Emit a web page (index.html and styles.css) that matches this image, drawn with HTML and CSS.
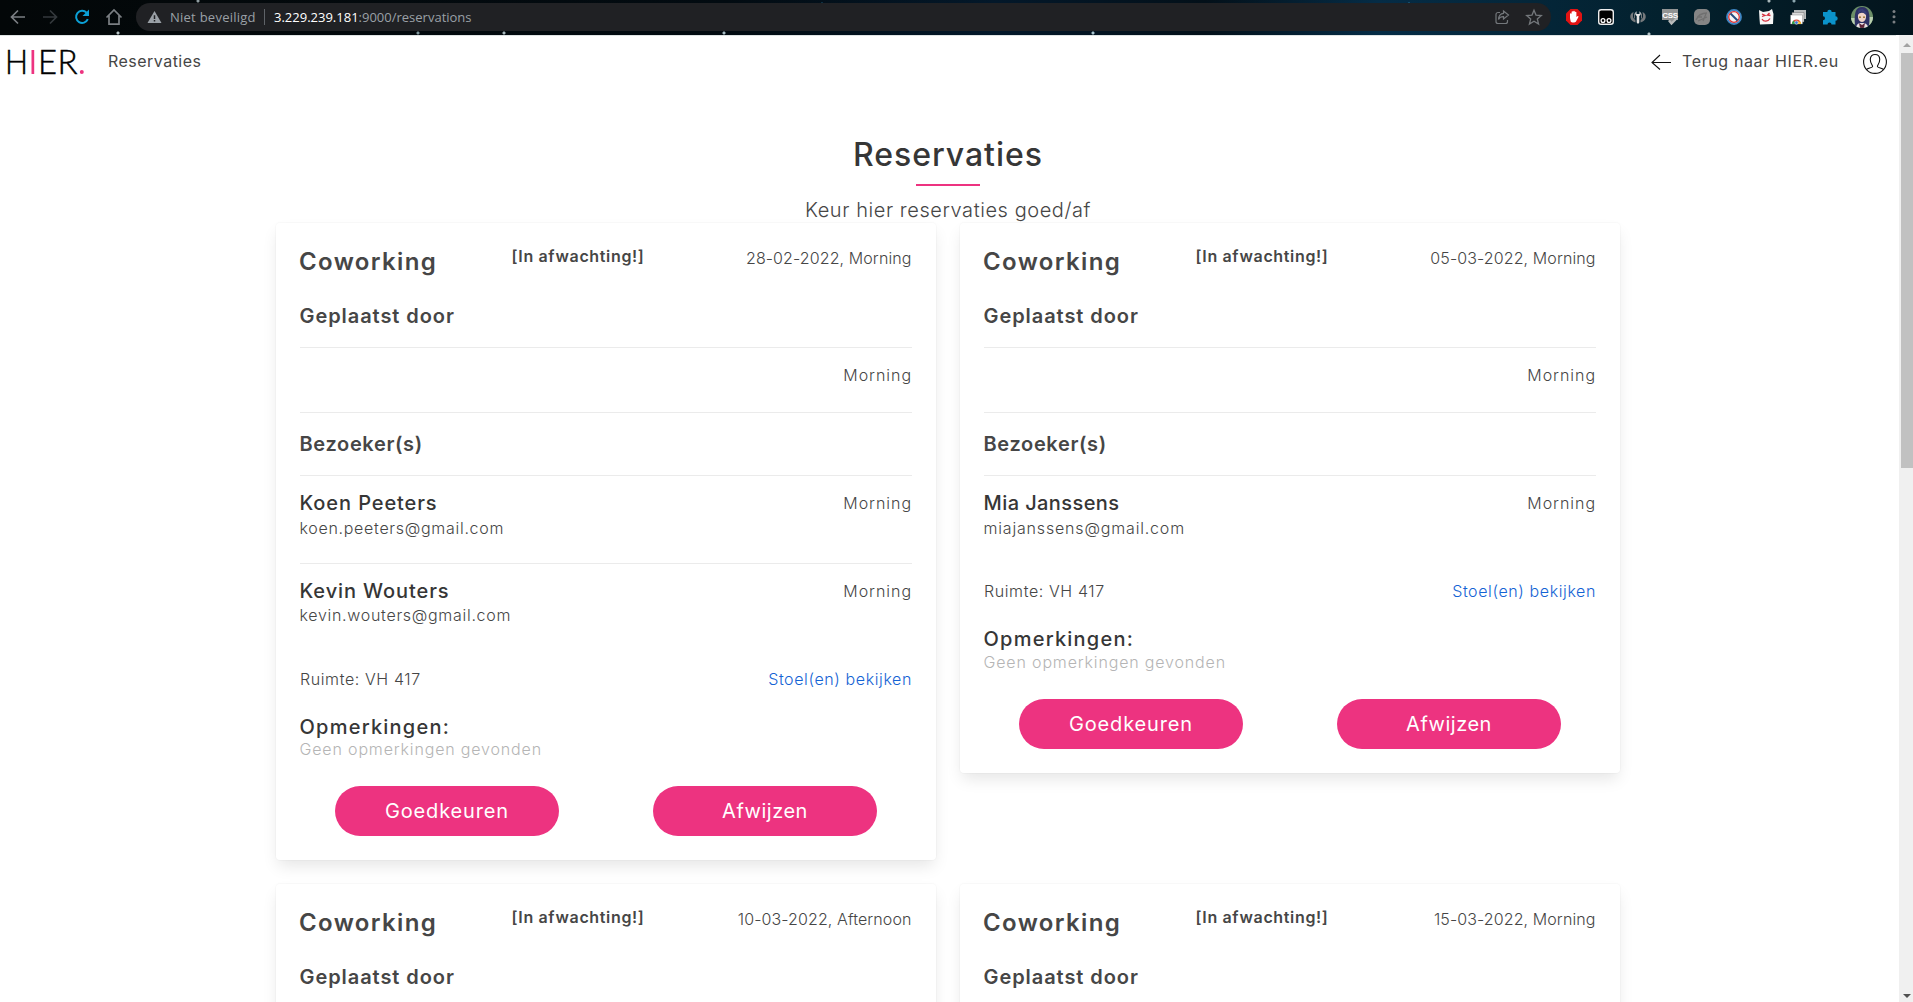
FILE: index.html
```html
<!DOCTYPE html>
<html lang="nl">
<head>
<meta charset="utf-8">
<title>Reservaties</title>
<link rel="stylesheet" href="styles.css">
</head>
<body>
<div class="browser">
  <div class="toolbar">
    <svg class="tool" viewBox="0 0 20 20" fill="none" stroke="#7b7f83" stroke-width="1.7"><path d="M17 10H4M10 3.5 3.5 10l6.500 6.500"/></svg>
    <svg class="tool" viewBox="0 0 20 20" fill="none" stroke="#34393d" stroke-width="1.700"><path d="M3 10h13M10 3.500l6.500 6.500L10 16.500"/></svg>
    <svg class="tool" viewBox="0 0 20 20"><path d="M15.800 12.200A6.100 6.100 0 1 1 14.600 5.600" fill="none" stroke="#0ba0d6" stroke-width="2"/><path d="M17 2.500V9h-6.500z" fill="#0ba0d6"/></svg>
    <svg class="tool" viewBox="0 0 20 20" fill="none" stroke="#7b7f83" stroke-width="1.700"><path d="M2.500 10.500 10 3l7.500 7.500M5 8.500v8.700h10V8.500"/></svg>
    <div class="omnibox">
      <svg class="warn" viewBox="0 0 16 14"><path d="M8 0.500 15.500 13.500H.500z" fill="#9aa0a6"/><path d="M7.200 5h1.600v4H7.200zM7.200 10.200h1.600v1.600H7.200z" fill="#202124"/></svg>
      <span class="insecure">Niet beveiligd</span>
      <span class="sep"></span>
      <span class="url"><b>3.229.239.181</b>:9000/reservations</span>
      <span class="push"></span>
      <svg class="tool" viewBox="0 0 20 20" fill="none" stroke="#73777b" stroke-width="1.200"><path d="M8 5.500H6a2 2 0 0 0-2 2v7a2 2 0 0 0 2 2h7.500a2 2 0 0 0 2-2V13"/><path d="M11.500 4 16.500 8l-5 4V9.700C9 9.600 7.500 10.500 6.500 12.500c.200-3.700 2-5.900 5-6.200z"/></svg>
      <svg class="tool" viewBox="0 0 20 20" fill="none" stroke="#73777b" stroke-width="1.300"><path d="m10 3.200 2 4.900 5.300.4-4 3.400 1.300 5.200L10 14.300l-4.600 2.800 1.300-5.200-4-3.400 5.300-.4z"/></svg>
    </div>
    <div class="extensions">
      <svg class="tool" viewBox="0 0 20 20"><path d="M6.500 2h7L18 6.500v7L13.500 18h-7L2 13.500v-7z" fill="#e11313"/><path d="M6 11V7a.8.8 0 0 1 1.600 0V5a.8.8 0 0 1 1.600 0V4.500a.8.8 0 0 1 1.600 0V5.500a.8.8 0 0 1 1.600 0V10l1-.8c.800-.3 1.300.3.900 1l-2.300 4.300c-.8 1.300-4.600 1.300-5.300 0z" fill="#fff"/></svg>
      <svg class="tool" viewBox="0 0 20 20"><rect x="2.700" y="2.700" width="14.600" height="14.600" rx="2.500" fill="#000" stroke="#eee" stroke-width="1.400"/><circle cx="7" cy="13.500" r="1.900" fill="none" stroke="#fff" stroke-width="1.300"/><circle cx="13" cy="13.500" r="1.900" fill="none" stroke="#fff" stroke-width="1.300"/></svg>
      <svg class="tool" viewBox="0 0 20 20"><path d="M5.500 5C3 6 2 8 2.300 10.500S5 15 7.500 15.500V13C5.500 12 4.700 10 5 8zM14.500 5c2.500 1 3.500 3 3.200 5.500S15 15 12.500 15.500V13c2-1 2.800-3 2.500-5z" fill="#75797c"/><path d="M6.500 6.500v5M13.500 6.500v5" stroke="#75797c"/><path d="M8.500 4.200V7h3V4.200c1.700 1 1.800 3.600-.2 4.800V15.500L10 17l-1.300-1.500V9c-2-1.200-1.900-3.800-.2-4.800z" fill="#e4e4e4"/></svg>
      <svg class="tool" viewBox="0 0 20 20"><path d="M2 2h16v11h-4l-2 3-4-3H2z" fill="#929494"/><text x="10" y="10.500" text-anchor="middle" class="css-label">CSS</text><path d="m9 13.500 2.500 3L17 11" fill="none" stroke="#b9bbbb" stroke-width="2.200"/></svg>
      <svg class="tool" viewBox="0 0 20 20"><rect x="2" y="2" width="16" height="16" rx="5" fill="#858585"/><path d="M4 13c2-5 7-7 11-7M6 14l9-4M5 10h5m1 4 3-7" stroke="#707070" stroke-width="1.300" fill="none"/></svg>
      <svg class="tool" viewBox="0 0 20 20"><circle cx="10" cy="10" r="7" fill="#f5f5f5" stroke="#3f86c4" stroke-width="1.800"/><circle cx="10" cy="10" r="5.300" fill="none" stroke="#d33" stroke-width="1.300"/><path d="m6.500 6.500 7 7" stroke="#234c80" stroke-width="1.900"/></svg>
      <svg class="tool" viewBox="0 0 20 20"><path d="m3 3 4 2 6-1 3-2 1.500 5-.5 10L4 17.500 3.500 12z" fill="#f6f6f6"/><path d="M6 12c1.800 3.200 6 2.800 8-.5M6 7l3 1.500-3 1M13.500 6 11.500 8l3 .5" fill="none" stroke="#d52c3b" stroke-width="1.300"/></svg>
      <svg class="tool" viewBox="0 0 20 20"><path d="M6 3h12v9h-2V6H6z" fill="#b9bcbd"/><path d="M4 5.500h12V15H4z" fill="#dadada" stroke="#555" stroke-width=".4"/><path d="M2.500 8h12v9h-12z" fill="#fff" stroke="#777" stroke-width=".4"/><path d="M4 17a4.500 4.500 0 0 1 9 0z" fill="#dd4936"/><path d="M4 17c0-2 .8-3 1.500-3.500L8 17z" fill="#2da14c"/><path d="M13 17c0-1.300-.4-2-.8-2.500H9V17z" fill="#f7c22b"/><circle cx="8.500" cy="15.600" r="1.700" fill="#3977dc" stroke="#fff" stroke-width=".5"/></svg>
      <svg class="tool" viewBox="0 0 20 20"><path d="M3 5h4.300a2.200 2.200 0 1 1 4.400 0H15.500v4.300a2.200 2.200 0 1 1 0 4.400V17.500h-4a2 2 0 0 0-4 0H3v-4.300a2 2 0 0 0 0-4z" fill="#0b93cb"/></svg>
      <svg class="avatar" viewBox="0 0 22 22"><defs><clipPath id="face"><circle cx="11" cy="11" r="11"/></clipPath></defs><g clip-path="url(#face)"><path d="M0 0h22v22H0z" fill="#6c8f68"/><path d="M0 12h6v6H0zM16 11h6v8h-6z" fill="#b8cfae"/><path d="M4 20C3 8 4 1 11 1s8.500 7 7 19z" fill="#2e3265"/><path d="M7 9c1-3 7-3 8 0 .5 4-1.500 7-4 7s-4.500-3-4-7z" fill="#f0d3c6"/><path d="M6.500 10c1-4 3-4 4-5 1 2 4 2 5 5V6l-4-3-4 1z" fill="#383d78"/><path d="M5 22c1-5 3-5 6-5s6 1 6 5z" fill="#e8e1e5"/><path d="m8 17 3 2 3-2-1 5H9z" fill="#5c2438"/><circle cx="9" cy="11.200" r=".9" fill="#8c6a22"/><circle cx="13" cy="11.200" r=".9" fill="#8c6a22"/></g></svg>
      <svg class="tool" viewBox="0 0 20 20" fill="#7b7f83"><circle cx="10" cy="4.500" r="1.500"/><circle cx="10" cy="9.800" r="1.500"/><circle cx="10" cy="15" r="1.500"/></svg>
    </div>
  </div>

  <div class="viewport">
    <div class="page">
      <nav class="navbar">
        <svg class="logo" viewBox="-4 -10 85 46" role="img" aria-label="HIER.">
          <g class="logo-text">
            <text x="-2" y="25" textLength="23" lengthAdjust="spacingAndGlyphs">H</text>
            <text x="31" y="25" textLength="19" lengthAdjust="spacingAndGlyphs">E</text>
            <text x="50.500" y="25" textLength="20" lengthAdjust="spacingAndGlyphs">R</text>
          </g>
          <path class="logo-accent" d="M24.500 1h2.700v24h-2.700z"/>
          <circle class="logo-accent" cx="74.800" cy="23" r="2"/>
        </svg>
        <a class="nav-link reserve">Reservaties</a>
        <span class="push"></span>
        <svg class="back" viewBox="0 0 20 16" fill="none" stroke="#111" stroke-width="1.100"><path d="M20 8.500H1M9 1 1 8.500 9 15.500"/></svg>
        <a class="nav-link home">Terug naar HIER.eu</a>
        <svg class="user" viewBox="0 0 24 24" fill="none" stroke="#111" stroke-width="1.100"><circle cx="12" cy="12" r="11.400"/><path d="M3.500 19.500C5 18 9.500 18 9.600 16.500c0-2-2.300-2.500-2.300-7C7.300 6 9.500 4.500 12 4.500s4.700 1.500 4.700 5c0 4.500-2.300 5-2.300 7 .1 1.500 4.600 1.500 6.100 3"/></svg>
      </nav>

      <main class="content">
        <h1 class="title">Reservaties</h1>
        <div class="underline"></div>
        <p class="subtitle">Keur hier reservaties goed/af</p>

        <div class="cards">
          <article class="card">
            <header class="card-head"><h2 class="kind">Coworking</h2><strong class="status">[In afwachting!]</strong><span class="date">28-02-2022, Morning</span></header>
            <h3 class="section placed">Geplaatst door</h3>
            <div class="row placer"><span class="slot">Morning</span></div>
            <h3 class="section visitors">Bezoeker(s)</h3>
            <div class="row person"><div><h4 class="name">Koen Peeters</h4><p class="mail">koen.peeters@gmail.com</p></div><span class="slot">Morning</span></div>
            <div class="row person"><div><h4 class="name">Kevin Wouters</h4><p class="mail">kevin.wouters@gmail.com</p></div><span class="slot">Morning</span></div>
            <div class="room"><span>Ruimte: VH 417</span><a class="seats">Stoel(en) bekijken</a></div>
            <h4 class="name remarks">Opmerkingen:</h4>
            <p class="none">Geen opmerkingen gevonden</p>
            <div class="actions"><button class="btn approve">Goedkeuren</button><button class="btn reject">Afwijzen</button></div>
          </article>

          <article class="card">
            <header class="card-head"><h2 class="kind">Coworking</h2><strong class="status">[In afwachting!]</strong><span class="date">05-03-2022, Morning</span></header>
            <h3 class="section placed">Geplaatst door</h3>
            <div class="row placer"><span class="slot">Morning</span></div>
            <h3 class="section visitors">Bezoeker(s)</h3>
            <div class="row person"><div><h4 class="name tight">Mia Janssens</h4><p class="mail wide">miajanssens@gmail.com</p></div><span class="slot">Morning</span></div>
            <div class="room"><span>Ruimte: VH 417</span><a class="seats">Stoel(en) bekijken</a></div>
            <h4 class="name remarks">Opmerkingen:</h4>
            <p class="none">Geen opmerkingen gevonden</p>
            <div class="actions"><button class="btn approve">Goedkeuren</button><button class="btn reject">Afwijzen</button></div>
          </article>

          <article class="card">
            <header class="card-head"><h2 class="kind">Coworking</h2><strong class="status">[In afwachting!]</strong><span class="date">10-03-2022, Afternoon</span></header>
            <h3 class="section placed">Geplaatst door</h3>
            <div class="row placer"></div>
          </article>

          <article class="card">
            <header class="card-head"><h2 class="kind">Coworking</h2><strong class="status">[In afwachting!]</strong><span class="date">15-03-2022, Morning</span></header>
            <h3 class="section placed">Geplaatst door</h3>
            <div class="row placer"></div>
          </article>
        </div>
      </main>
    </div>

    <div class="scrollbar">
      <svg class="arrow" viewBox="0 0 8 4"><path d="M4 0 8 4H0z" fill="#a3a3a3"/></svg>
      <div class="thumb"></div>
      <span class="push"></span>
      <svg class="arrow" viewBox="0 0 8 4"><path d="M0 0h8L4 4z" fill="#505050"/></svg>
    </div>
  </div>
</div>
</body>
</html>
```
FILE: styles.css
```css
* { box-sizing: border-box; }

body, h1, h2, h3, h4, p { margin: 0; }

body {
  font: 300 16px/24px Inter, sans-serif;
  color: #464646;
  letter-spacing: .7px;
  background: #fff;
}

.browser {
  display: flex;
  flex-direction: column;
  height: 100vh;
  overflow: hidden;
}

.push { flex: 1; }

/* Browser toolbar with a starry theme */
.toolbar {
  flex: none;
  height: 35px;
  padding: 0 7px 1px 6px;
  display: flex;
  align-items: center;
  gap: 8px;
  background:
    radial-gradient(circle at 198px 1px, #8f9ca0 0 1px, transparent 2px),
    radial-gradient(circle at 118px 33px, #b9c6c9 0 1px, transparent 2px),
    radial-gradient(circle at 418px 33px, #7f979d 0 1px, transparent 2px),
    radial-gradient(circle at 504px 33px, #a8b8bc 0 1px, transparent 2px),
    radial-gradient(circle at 724px 33px, #a8bcc3 0 1px, transparent 2px),
    radial-gradient(circle at 1093px 33px, #a8c4cf 0 1px, transparent 2px),
    radial-gradient(circle at 822px 4px, #1c5d7c 0 1px, transparent 2px),
    radial-gradient(circle at 1409px 4px, #2c7ea3 0 1px, transparent 2px),
    radial-gradient(circle at 1649px 34px, #b8c7ca 0 1px, transparent 2px),
    radial-gradient(circle at 1769px 1px, #a8b7ba 0 1px, transparent 2px),
    radial-gradient(circle at 1794px 1px, #8ba6ae 0 1px, transparent 2px),
    linear-gradient(90deg, #030708 0, #020b11 38%, #03182a 52%, #031019 63%, #052c46 72%, #03202c 88%, #03141c 100%);
}

.tool { width: 24px; height: 20px; flex: none; }

.omnibox {
  flex: none;
  width: 1415px;
  height: 28px;
  margin-left: 2px;
  padding: 0 5px 0 11px;
  border-radius: 14px;
  background: #202124;
  display: flex;
  align-items: center;
  font: 13px/20px "Open Sans", sans-serif;
  letter-spacing: 0;
  color: #9aa0a6;
}

.omnibox .tool + .tool { margin-left: 8px; }
.warn { width: 15px; height: 14px; }
.insecure { margin-left: 8px; width: 87px; letter-spacing: .25px; white-space: nowrap; }
.sep { width: 1px; height: 16px; margin: 0 9px 0 7px; background: #5f6368; }
.url b { font-weight: 400; color: #fff; }

.extensions {
  display: flex;
  align-items: center;
  gap: 8px;
  margin-left: 3px;
}

.css-label { font: 700 8px/1 "Liberation Sans", sans-serif; letter-spacing: -.3px; fill: #fff; }
.avatar { width: 22px; height: 22px; margin: 0 1px; flex: none; }

/* Page */
.viewport { flex: 1; min-height: 0; display: flex; }

.page {
  flex: 1;
  min-width: 0;
  padding-right: 3px;
  overflow: hidden;
}

.navbar {
  height: 53px;
  padding: 0 9px 0 3px;
  border-top: 1px solid #dfe4e4;
  display: flex;
  align-items: center;
  font-weight: 400;
}

.logo { width: 85px; height: 46px; overflow: visible; }
.logo-text { font: 300 33px Lato, sans-serif; letter-spacing: 0; fill: #000; stroke: #000; stroke-width: .5px; }
.logo-accent { fill: #ed3380; }
.nav-link { white-space: nowrap; padding-bottom: 2px; }
.reserve { margin-left: 20px; letter-spacing: .47px; }
.home { margin-left: 11px; width: 158px; letter-spacing: .62px; }
.back { width: 20px; height: 16px; }
.user { width: 24px; height: 24px; margin-left: 23px; }

.content { display: flex; flex-direction: column; align-items: center; }

.title {
  margin-top: 49px;
  font-size: 32px;
  line-height: 36px;
  font-weight: 500;
  letter-spacing: .95px;
  color: #363636;
}

.underline { width: 64px; height: 2px; margin-top: 11px; background: #ed3380; }

.subtitle {
  margin-top: 12px;
  font-size: 20px;
  letter-spacing: .57px;
}

.cards {
  margin-top: 1px;
  display: grid;
  grid-template-columns: 660px 660px;
  gap: 24px;
  align-items: start;
}

.card {
  padding: 24px;
  border-radius: 4px;
  background: #fff;
  box-shadow: 0 8px 16px -2px rgba(10, 10, 10, .1), 0 0 0 1px rgba(10, 10, 10, .02);
}

.card-head {
  display: grid;
  grid-template-columns: 212px 160px 1fr;
  align-items: start;
  height: 29px;
}

.kind { margin-left: -1px; font-size: 24px; line-height: 29px; font-weight: 600; letter-spacing: 1.35px; }
.status { margin-left: -.5px; line-height: 19px; font-weight: 600; letter-spacing: .65px; }
.date { line-height: 23px; letter-spacing: .1px; text-align: right; margin-right: .5px; }

.section { font-size: 20px; font-weight: 600; }
.placed { margin: 28px 0 19px -.5px; letter-spacing: .93px; }
.visitors { margin: 0 0 19px -.5px; padding-top: 19px; letter-spacing: .65px; }

.row {
  display: flex;
  justify-content: space-between;
  border-top: 1px solid #ebebeb;
}

.placer { height: 66px; padding-top: 17px; border-bottom: 1px solid #ebebeb; }
.slot { margin-left: auto; line-height: 20px; letter-spacing: .95px; }
.person { height: 87.5px; padding-top: 15px; }
.person .slot { margin-top: 2px; }
.name { margin-left: -.5px; font-size: 20px; font-weight: 500; letter-spacing: .9px; color: #363636; }
.tight { letter-spacing: .42px; }
.mail { margin-top: 1px; margin-left: -.5px; }
.person + .person .mail { margin-top: 0; }
.wide { letter-spacing: .82px; }

.room { display: flex; justify-content: space-between; margin-top: 16.5px; letter-spacing: .6px; }
.seats { color: #1463d4; }
.remarks { margin-top: 24px; letter-spacing: 1.23px; }
.none { margin-top: -.5px; margin-left: -.5px; line-height: 22px; letter-spacing: .84px; color: #b5b5b5; }

.actions { display: flex; justify-content: space-between; margin-top: 26px; padding: 0 35px; }

.btn {
  width: 224px;
  height: 50px;
  padding: 0;
  border: 0;
  border-radius: 25px;
  background: #ed3380;
  color: #fff;
  font: 400 20px/50px Inter, sans-serif;
  letter-spacing: .85px;
}

.reject { letter-spacing: .5px; }

/* Scrollbar */
.scrollbar {
  flex: none;
  width: 14px;
  padding: 8px 0 4px 2px;
  display: flex;
  flex-direction: column;
  align-items: flex-end;
  background: #f0f0f0;
}

.arrow { width: 8px; height: 4px; margin-right: 2px; }
.thumb { width: 12px; height: 415px; margin-top: 6px; background: #c1c1c1; }
```
